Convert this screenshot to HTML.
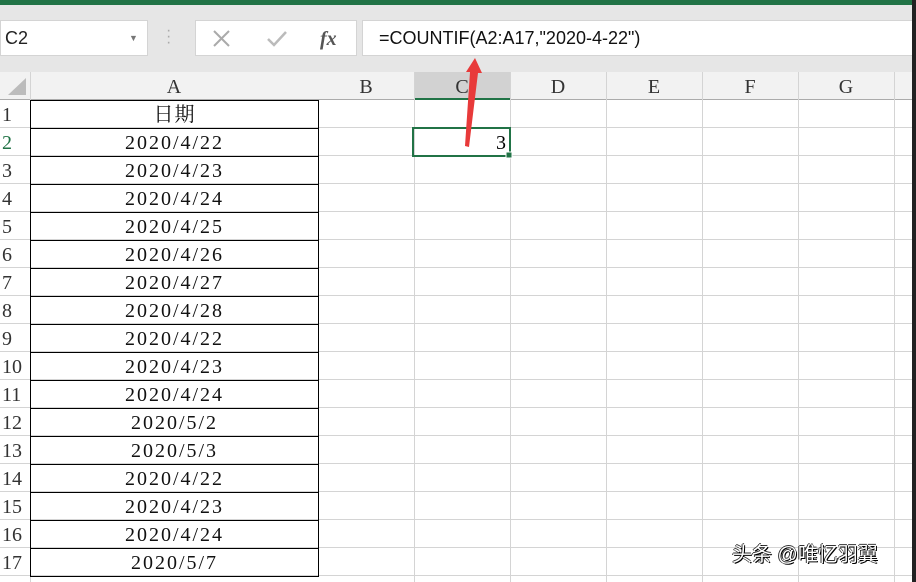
<!DOCTYPE html><html><head><meta charset="utf-8"><style>
body{margin:0;width:916px;height:582px;overflow:hidden;background:#fff;position:relative;font-family:"Liberation Serif","Noto Serif CJK SC",serif}
.a{position:absolute}
.t{font-family:"Liberation Sans","Noto Sans CJK SC",sans-serif}
</style></head><body>
<div class="a" style="left:0;top:0;width:916px;height:5px;background:#217346"></div>
<div class="a" style="left:0;top:5px;width:916px;height:67px;background:#e6e6e6"></div>
<div class="a t" style="left:0;top:20px;width:148px;height:36px;background:#fff;border:1px solid #d4d4d4;box-sizing:border-box;font-size:18px;line-height:34px;padding-left:4px;color:#222">C2<span class="a" style="left:128px;top:0;font-size:9px;color:#777">▼</span></div>
<div class="a t" style="left:166px;top:28px;color:#aaa;font-size:16px;line-height:6px">·<br>·<br>·</div>
<div class="a" style="left:195px;top:20px;width:162px;height:36px;background:#fff;border:1px solid #d4d4d4;box-sizing:border-box"></div>
<svg class="a" style="left:210px;top:28px" width="140" height="22"><path d="M4 3L19 18M19 3L4 18" stroke="#aaa" stroke-width="2"/><path d="M58 11L64 17L76 4" stroke="#bbb" stroke-width="2.5" fill="none"/><text x="110" y="17" font-family="Liberation Serif" font-style="italic" font-weight="bold" font-size="20" fill="#555">fx</text></svg>
<div class="a t" style="left:362px;top:20px;width:560px;height:36px;background:#fff;border:1px solid #d4d4d4;box-sizing:border-box;font-size:18px;line-height:34px;padding-left:16px;color:#111">=COUNTIF(A2:A17,"2020-4-22")</div>
<div class="a" style="left:0;top:72px;width:916px;height:28px;background:#f2f2f2;border-bottom:1px solid #ababab;box-sizing:border-box"></div>
<svg class="a" style="left:4px;top:76px" width="24" height="20"><path d="M22 2V19H4Z" fill="#bcbcbc"/></svg>
<div class="a" style="left:414px;top:72px;width:96px;height:28px;background:#d2d2d2;border-bottom:2px solid #217346;box-sizing:border-box"></div>
<svg class="a" style="left:0;top:0" width="916" height="582">
<g stroke="#d4d4d4" stroke-width="1">
<line x1="30.5" y1="72" x2="30.5" y2="582"/>
<line x1="414.5" y1="100" x2="414.5" y2="582"/><line x1="510.5" y1="72" x2="510.5" y2="582"/><line x1="606.5" y1="72" x2="606.5" y2="582"/><line x1="702.5" y1="72" x2="702.5" y2="582"/><line x1="798.5" y1="72" x2="798.5" y2="582"/><line x1="894.5" y1="72" x2="894.5" y2="582"/><line x1="414.5" y1="72" x2="414.5" y2="100"/>
</g>
<g id="rows" stroke="#d4d4d4"></g>
<rect x="912" y="0" width="4" height="582" fill="#222"/>
<rect x="413" y="128" width="97" height="28" fill="none" stroke="#217346" stroke-width="2"/>
<rect x="506" y="152" width="6" height="6" fill="#217346" stroke="#fff"/>
<path d="M465 146L470 72L466 72L475 58L482 73L478 73L469 147Z" fill="#e83a3a"/>
</svg>
<div id="c"></div>
<script>
var r=document.getElementById('rows'),h='';
for(var i=0;i<=17;i++){var y=100+28*i+27.5;h+='<line x1="0" y1="'+y+'" x2="916" y2="'+y+'"/>';}
r.innerHTML=h;
var d=["日期","2020/4/22","2020/4/23","2020/4/24","2020/4/25","2020/4/26","2020/4/27","2020/4/28","2020/4/22","2020/4/23","2020/4/24","2020/5/2","2020/5/3","2020/4/22","2020/4/23","2020/4/24","2020/5/7"];
var s='';
['A','B','C','D','E','F','G'].forEach(function(c,k){var x=k==0?30:318+96*(k-1),w=k==0?288:96;s+='<div class="a" style="left:'+x+'px;top:72px;width:'+w+'px;height:28px;text-align:center;font-size:20px;line-height:30px;color:#333">'+c+'</div>';});
for(var i=0;i<17;i++){var y=100+28*i;
s+='<div class="a" style="left:0;top:'+y+'px;width:30px;height:28px;font-size:20px;line-height:30px;padding-left:2px;color:'+(i==1?'#217346':'#333')+'">'+(i+1)+'</div>';
s+='<div class="a" style="left:30px;top:'+y+'px;width:289px;height:29px;border:1px solid #000;box-sizing:border-box;text-align:center;font-size:20px;letter-spacing:'+(i==0?'1px':'2px')+';line-height:28px;color:#111">'+d[i]+'</div>';}
s+='<div class="a" style="left:414px;top:128px;width:92px;height:28px;text-align:right;font-size:20px;line-height:30px">3</div>';
s+='<div class="a t" style="left:732px;top:538px;font-size:20px;color:#fff;text-shadow:1px 1px 0 #000,-1px 0 0 #333,0 -1px 0 #333">头条 @唯忆羽翼</div>';
document.getElementById('c').innerHTML=s;
</script>
</body></html>
